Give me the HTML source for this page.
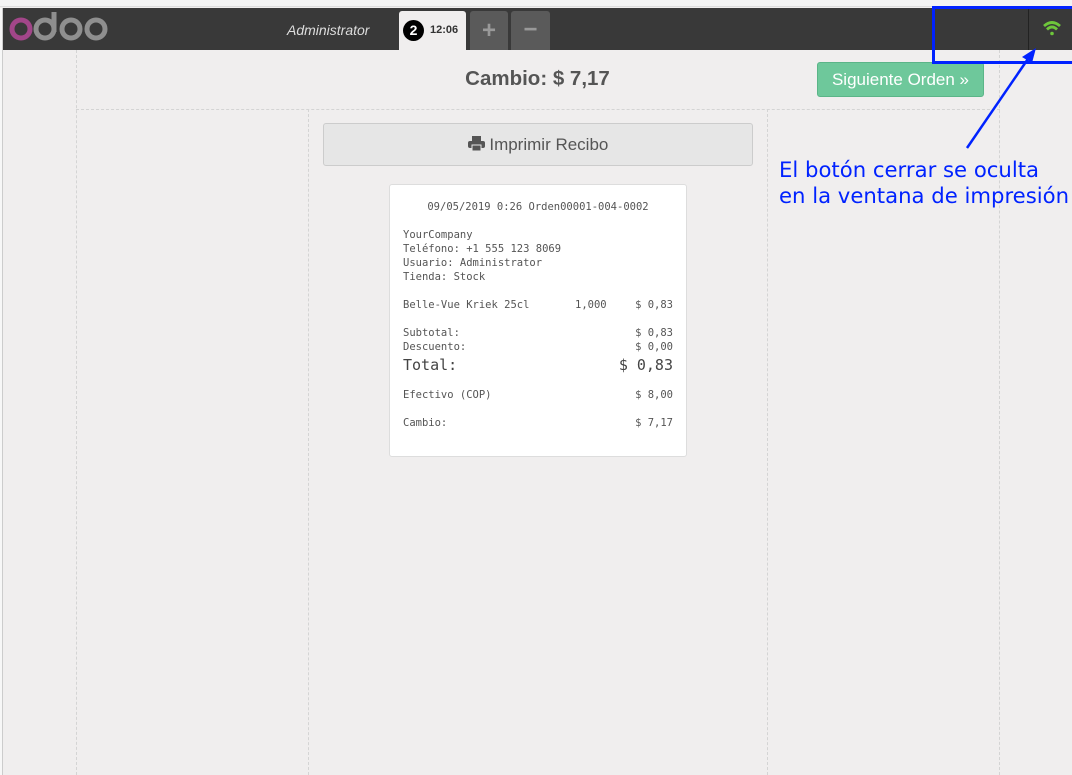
<!DOCTYPE html>
<html><head><meta charset="utf-8"><style>
*{margin:0;padding:0;box-sizing:border-box}
body{width:1072px;height:775px;overflow:hidden;background:#f0eeee;font-family:"Liberation Sans",sans-serif;position:relative}
.abs{position:absolute}
.hdr{left:3px;top:8px;width:1069px;height:42px;background:#393939}
.mono{font-family:"DejaVu Sans Mono","Liberation Mono",monospace;font-size:10.5px;color:#555;line-height:14px}
.r{position:absolute;right:13px}
</style></head><body>
<div class="abs" style="left:0;top:0;width:1072px;height:7px;background:#f3f3f3;border-bottom:1px solid #ddd"></div>
<div class="abs" style="left:0;top:8px;width:3px;height:767px;background:#f7f7f7;border-right:1px solid #ccc"></div>
<div class="abs hdr"></div>
<svg class="abs" style="left:8px;top:10px" width="102" height="32" viewBox="0 0 102 32">
<circle cx="13" cy="19" r="9" fill="none" stroke="#a24689" stroke-width="5"/>
<circle cx="37" cy="19" r="9" fill="none" stroke="#8f8f8f" stroke-width="5"/>
<line x1="46" y1="2" x2="46" y2="22" stroke="#8f8f8f" stroke-width="5"/>
<circle cx="63" cy="19" r="9" fill="none" stroke="#8f8f8f" stroke-width="5"/>
<circle cx="88" cy="19" r="9" fill="none" stroke="#8f8f8f" stroke-width="5"/>
</svg>
<div class="abs" style="left:287px;top:22px;color:#ddd;font-style:italic;font-size:14px">Administrator</div>
<div class="abs" style="left:399px;top:11px;width:67px;height:39px;background:#f0eeee;border-radius:3px 3px 0 0"></div>
<div class="abs" style="left:403px;top:20px;width:21px;height:21px;border-radius:50%;background:#000;color:#fff;font-weight:bold;font-size:14px;text-align:center;line-height:21px">2</div>
<div class="abs" style="left:430px;top:24px;font-size:11px;font-weight:bold;color:#333">12:06</div>
<div class="abs" style="left:470px;top:11px;width:38px;height:39px;background:#5a5a5a;border-radius:3px 3px 0 0;color:#999;font-size:24px;font-weight:bold;text-align:center;line-height:39px">+</div>
<div class="abs" style="left:511px;top:11px;width:39px;height:39px;background:#5a5a5a;border-radius:3px 3px 0 0;color:#999;font-size:24px;font-weight:bold;text-align:center;line-height:37px">−</div>
<div class="abs" style="left:1028px;top:8px;width:1px;height:42px;background:#222"></div>
<svg class="abs" style="left:1042px;top:20px" width="20" height="16" viewBox="0 0 20 16">
<path d="M2 6 Q10 -1 18 6" fill="none" stroke="#6ec73b" stroke-width="2.8"/>
<path d="M5 9.5 Q10 4.5 15 9.5" fill="none" stroke="#6ec73b" stroke-width="2.8"/>
<circle cx="10" cy="13.5" r="1.8" fill="#6ec73b"/>
</svg>
<div class="abs" style="left:76px;top:50px;height:725px;border-left:1px dashed #d4d4d4"></div>
<div class="abs" style="left:76px;top:109px;width:924px;border-top:1px dashed #d4d4d4"></div>
<div class="abs" style="left:308px;top:109px;height:666px;border-left:1px dashed #d4d4d4"></div>
<div class="abs" style="left:767px;top:109px;height:666px;border-left:1px dashed #d4d4d4"></div>
<div class="abs" style="left:999px;top:50px;height:725px;border-left:1px dashed #d4d4d4"></div>
<div class="abs" style="left:308px;top:67px;width:459px;text-align:center;font-size:20.5px;font-weight:bold;color:#555">Cambio: $ 7,17</div>
<div class="abs" style="left:817px;top:62px;width:167px;height:35px;background:#6ec89b;border:1px solid #5bb588;border-radius:3px;color:#fff;font-size:17px;text-align:center;line-height:34px">Siguiente Orden »</div>
<div class="abs" style="left:323px;top:123px;width:430px;height:43px;background:#e6e6e6;border:1px solid #ccc;border-radius:3px;color:#555;font-size:17px;text-align:center;line-height:42px"><svg width="17" height="15" viewBox="0 0 17 15" style="vertical-align:-1px"><rect x="4" y="0" width="9" height="5" fill="#555"/><rect x="0" y="5" width="17" height="7" rx="2" fill="#555"/><rect x="4" y="9" width="9" height="6" fill="#555" stroke="#e6e6e6" stroke-width="1"/></svg> Imprimir Recibo</div>
<div class="abs" style="left:389px;top:184px;width:298px;height:273px;background:#fff;border:1px solid #ddd;border-radius:3px"></div>
<div class="abs mono" style="left:390px;top:200px;width:296px;text-align:center">09/05/2019 0:26 Orden00001-004-0002</div>
<div class="abs mono" style="left:403px;top:228px;width:270px">YourCompany<br>Teléfono: +1 555 123 8069<br>Usuario: Administrator<br>Tienda: Stock</div>
<div class="abs mono" style="left:403px;top:298px;width:283px;height:14px">Belle-Vue Kriek 25cl<span style="position:absolute;left:172px">1,000</span><span class="r">$ 0,83</span></div>
<div class="abs mono" style="left:403px;top:326px;width:283px;height:14px">Subtotal:<span class="r">$ 0,83</span></div>
<div class="abs mono" style="left:403px;top:340px;width:283px;height:14px">Descuento:<span class="r">$ 0,00</span></div>
<div class="abs mono" style="left:403px;top:355px;width:283px;height:20px;font-size:15px;line-height:20px;color:#444">Total:<span class="r">$ 0,83</span></div>
<div class="abs mono" style="left:403px;top:388px;width:283px;height:14px">Efectivo (COP)<span class="r">$ 8,00</span></div>
<div class="abs mono" style="left:403px;top:416px;width:283px;height:14px">Cambio:<span class="r">$ 7,17</span></div>
<div class="abs" style="left:932px;top:6px;width:140px;height:58px;border:3px solid #0022ff;border-right:none"></div>
<svg class="abs" style="left:960px;top:45px" width="80" height="110" viewBox="0 0 80 110">
<line x1="7" y1="103" x2="72" y2="8" stroke="#0022ff" stroke-width="2.5"/>
<path d="M76 3 L62 12 L72 18 Z" fill="#0022ff"/>
</svg>
<div class="abs" style="left:779px;top:157px;color:#0022ff;font-family:'DejaVu Sans',sans-serif;font-size:21.2px;line-height:26px;white-space:nowrap">El botón cerrar se oculta<br>en la ventana de impresión</div>
</body></html>
